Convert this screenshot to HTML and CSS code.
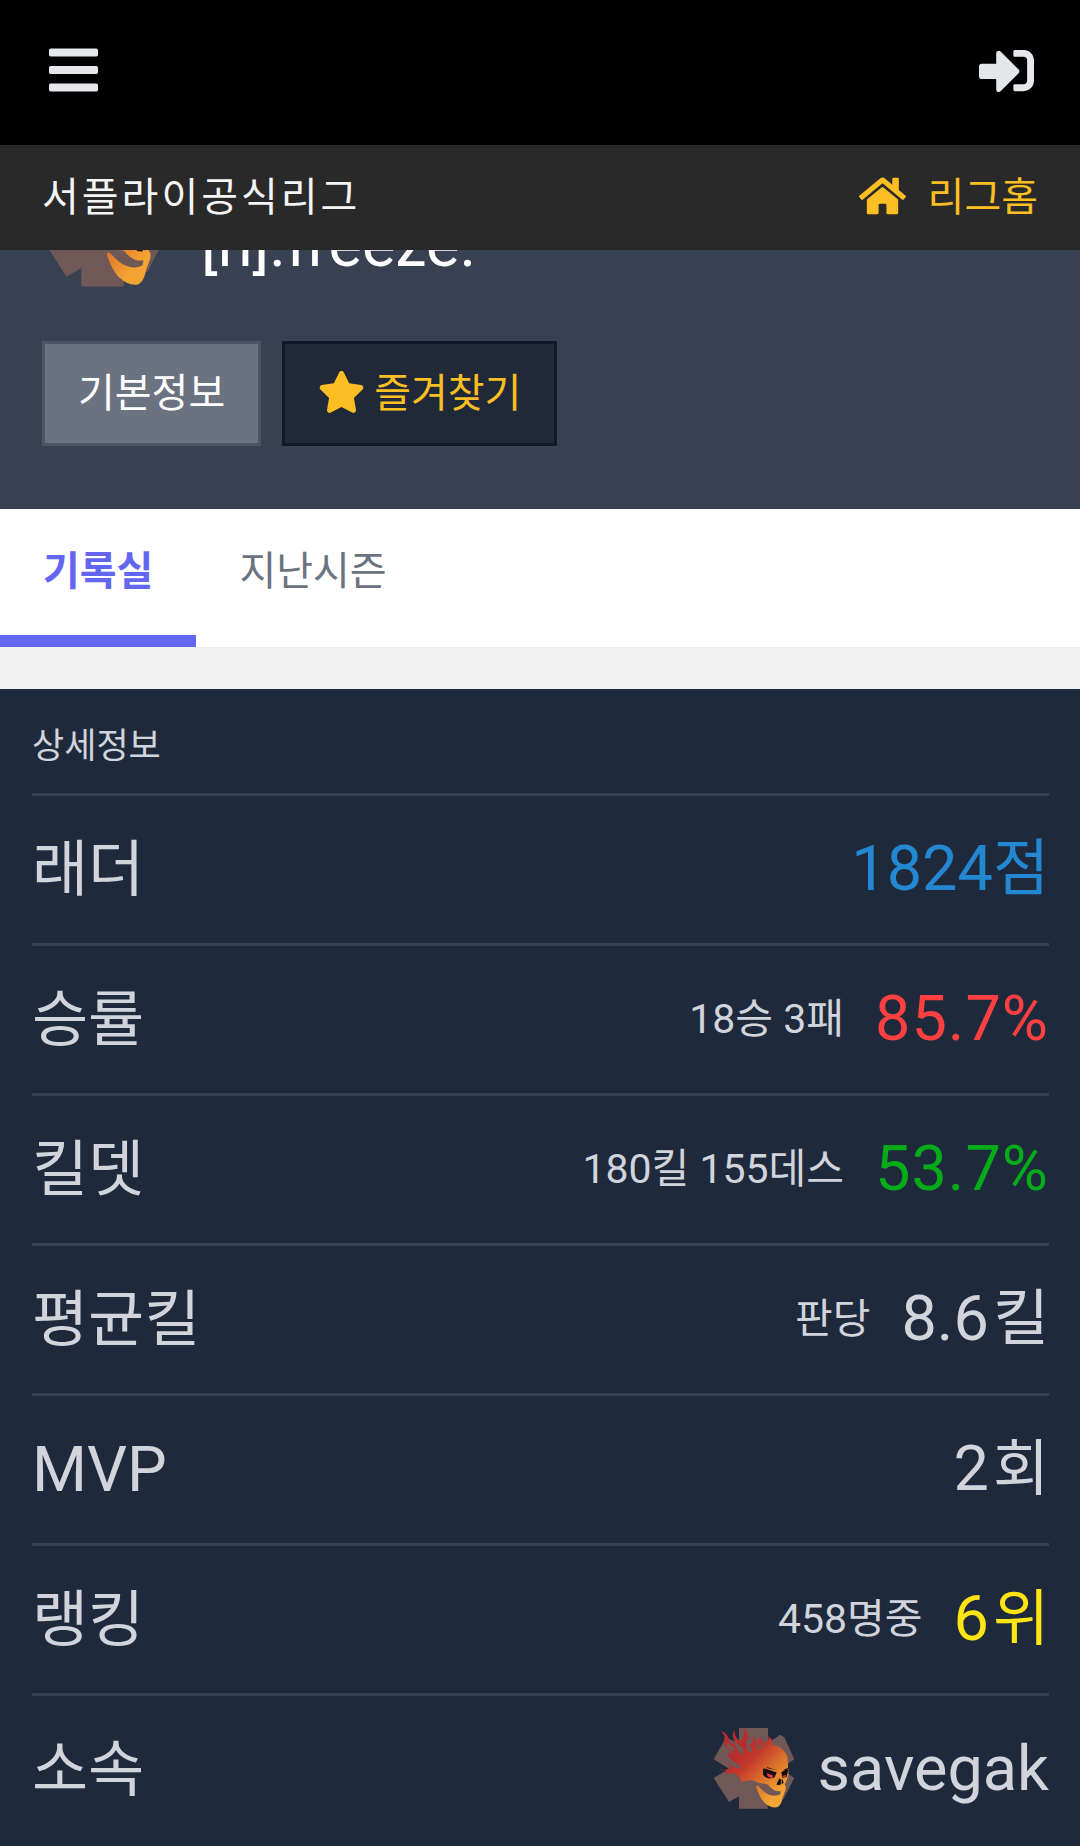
FILE: index.html
```html
<!DOCTYPE html>
<html lang="ko">
<head>
<meta charset="utf-8">
<meta name="viewport" content="width=device-width, initial-scale=1">
<title>서플라이공식리그</title>
<link rel="stylesheet" href="styles.css">
</head>
<body>
<svg class="sprite" aria-hidden="true">
  <defs>
    <linearGradient id="flame" gradientUnits="userSpaceOnUse" x1="150" y1="130" x2="270" y2="250">
      <stop offset="0" stop-color="#b92c2e"/>
      <stop offset=".25" stop-color="#c4392c"/>
      <stop offset=".6" stop-color="#da702c"/>
      <stop offset="1" stop-color="#f4a433"/>
    </linearGradient>
    <symbol id="skull" viewBox="70 58 246 243">
      <path fill="#6f5856" d="M148 58h87v44l37-24 12 8 30 66-40 28 40 28-32 62-8 4-40-20v46h-86v-37l-30 17-46-72 46-28-46-28 38-66 38 20z"/>
      <path fill="url(#flame)" d="M92 184c18 2 24-4 32-9-10-14-18-32-9-41 8-5 14 1 19 7-4-15-19-15-27-26-7-10-3-23-2-31-4-7-6-12-12-17 14 4 23 14 25 25 2 12 12 14 20 11-9-10-12-25-4-40 1 18 8 31 21 34 9-8 8-22 7-39 10 12 19 24 12 38-4 9 3 14 10 10 9-5 6-18 11-26-1 10 3 14 9 18 2-5 4-9 9-12-1 13 9 14 16 15 10-10 9-14 6-20 12 8 14 19 11 27 20 1 38 14 46 34 4 17 2 31 4 44 2 15-4 27-11 42 8 8 0 22-6 39-2 13-7 24-16 29-14 2-27-3-38-14-14-14-20-33-26-48l4-4c8 5 17 18 30 23 14 6 28 4 38-2-16-4-28-12-36-23-14-5-25-1-34-8-15-10-30-3-47-1-2-10-6-18-15-23-17-3-24 0-37-4 6-2 10-5 16-7-10 2-18-1-26-3z"/>
      <path fill="#6f5856" d="M112 140c8 2 10 12 18 18 10 5 22 10 25 22-14-1-24-4-33-13-7-7-13-16-10-27zM136 96c6 9 11 14 19 19 7 5 8 14 3 22-10-2-10-12-16-18-7-7-9-14-6-23zM168 96c10-2 5 11 13 17 6 5 7 12 2 17-9-1-12-7-11-14 0-8-5-13-4-20zM116 98c1 10 6 15 14 18 5 4 6 8 4 14-7-5-17-6-21-14-3-6-1-13 3-18zM199 94c2 9 4 14 10 17 5 3 5 8 3 12-7 0-11-5-12-10-2-6-3-12-1-19zM222 98c3 6 6 11 4 17-4-1-6-4-6-8 0-3 0-6 2-9zM208 232c10-8 20-4 28 2 13 12 26 15 38 13l-2 10c-14 8-31 4-43-4-8-6-15-12-21-21z"/>
      <path fill="#160d10" d="M222 179c15 3 25 10 39 12l-6 15c-15 6-30 4-35-9 0-8 0-13 2-18zM275 190l21-8-5 23-13 3zM269 209l7 5-4 15-12-1zM279 210l3 13-7 4zM231 175l31 10-28-6zM280 185l18-9-10 11z"/>
      <path fill="#e6394d" d="M232 193l20 8-7 8-12-7zM279 201l11-2-4 8-7-1z"/>
    </symbol>
  </defs>
</svg>

<header class="topbar">
  <nav class="topbar__main">
    <button class="icon-button" type="button" aria-label="메뉴">
      <svg class="icon-menu" viewBox="0 0 448 512" fill="currentColor" aria-hidden="true"><path d="M16 132h416c8.800 0 16-7.200 16-16V76c0-8.800-7.200-16-16-16H16C7.200 60 0 67.200 0 76v40c0 8.800 7.200 16 16 16zm0 160h416c8.800 0 16-7.200 16-16v-40c0-8.800-7.200-16-16-16H16c-8.800 0-16 7.200-16 16v40c0 8.800 7.200 16 16 16zm0 160h416c8.800 0 16-7.200 16-16v-40c0-8.800-7.200-16-16-16H16c-8.800 0-16 7.200-16 16v40c0 8.800 7.200 16 16 16z"/></svg>
    </button>
    <a class="icon-button" href="#login" aria-label="로그인">
      <svg class="icon-login" viewBox="0 0 512 512" fill="currentColor" aria-hidden="true"><path d="M416 448h-84c-6.600 0-12-5.400-12-12v-40c0-6.600 5.400-12 12-12h84c17.700 0 32-14.300 32-32V160c0-17.700-14.300-32-32-32h-84c-6.600 0-12-5.400-12-12V76c0-6.600 5.400-12 12-12h84c53 0 96 43 96 96v192c0 53-43 96-96 96zm-47-201L201 79c-15-15-41-4.500-41 17v96H24c-13.300 0-24 10.700-24 24v96c0 13.300 10.700 24 24 24h136v96c0 21.500 26 32 41 17l168-168c9.300-9.400 9.300-24.600 0-34z"/></svg>
    </a>
  </nav>
  <div class="topbar__league">
    <span class="league-name">서플라이공식리그</span>
    <a class="league-home" href="#home">
      <svg class="icon-glyph" viewBox="0 0 576 512" fill="currentColor" aria-hidden="true"><path d="M280.370 148.260L96 300.110V464a16 16 0 0 0 16 16l112.060-.290a16 16 0 0 0 15.920-16V368a16 16 0 0 1 16-16h64a16 16 0 0 1 16 16v95.640a16 16 0 0 0 16 16.050L464 480a16 16 0 0 0 16-16V300L295.670 148.260a12.190 12.190 0 0 0-15.300 0zM571.600 251.470L488 182.560V44.050a12 12 0 0 0-12-12h-56a12 12 0 0 0-12 12v72.610L318.470 43a48 48 0 0 0-61 0L4.340 251.470a12 12 0 0 0-1.600 16.900l25.500 31A12 12 0 0 0 45.150 301l235.220-193.740a12.190 12.190 0 0 1 15.300 0L530.900 301a12 12 0 0 0 16.900-1.600l25.500-31a12 12 0 0 0-1.700-16.930z"/></svg>
      <span>리그홈</span>
    </a>
  </div>
</header>

<main>
  <section class="profile">
    <div class="profile__player">
      <svg class="profile__emblem" aria-hidden="true"><use href="#skull"/></svg>
      <h1 class="profile__name">[n].freeze.</h1>
    </div>
    <div class="profile__actions">
      <button class="button button--info" type="button">기본정보</button>
      <button class="button button--favorite" type="button">
        <svg class="icon-glyph" viewBox="0 0 576 512" fill="currentColor" aria-hidden="true"><path d="M259.300 17.800L194 150.200 47.900 171.500c-26.200 3.800-36.700 36.100-17.700 54.600l105.700 103-25 145.500c-4.500 26.300 23.200 46 46.400 33.700L288 439.600l130.700 68.700c23.200 12.200 50.900-7.400 46.400-33.700l-25-145.500 105.700-103c19-18.500 8.500-50.800-17.700-54.600L382 150.200 316.700 17.800c-11.700-23.600-45.600-23.900-57.400 0z"/></svg>
        <span>즐겨찾기</span>
      </button>
    </div>
  </section>

  <nav class="tabs">
    <a class="tab tab--active" href="#record" aria-current="page">기록실</a>
    <a class="tab" href="#seasons">지난시즌</a>
  </nav>

  <section class="details">
    <h2 class="details__title">상세정보</h2>
    <dl class="stats">
      <div class="stat"><dt>래더</dt><dd><span class="value value--blue">1824<span class="unit">점</span></span></dd></div>
      <div class="stat"><dt>승률</dt><dd><small>18승 3패</small><span class="value value--tracked value--red">85.7%</span></dd></div>
      <div class="stat"><dt>킬뎃</dt><dd><small>180킬 155데스</small><span class="value value--tracked value--green">53.7%</span></dd></div>
      <div class="stat"><dt>평균킬</dt><dd><small>판당</small><span class="value">8.6<span class="unit unit--spaced">킬</span></span></dd></div>
      <div class="stat"><dt class="latin">MVP</dt><dd><span class="value">2<span class="unit unit--spaced">회</span></span></dd></div>
      <div class="stat"><dt>랭킹</dt><dd><small>458명중</small><span class="value value--yellow">6<span class="unit unit--spaced">위</span></span></dd></div>
      <div class="stat"><dt>소속</dt><dd class="clan"><svg class="clan__emblem" aria-hidden="true"><use href="#skull"/></svg><a class="value" href="#clan">savegak</a></dd></div>
    </dl>
  </section>
</main>
</body>
</html>
```
FILE: styles.css
```css
* {
  box-sizing: border-box;
}

body {
  margin: 0;
  background: #f1f1f1;
  color: #d1d5db;
  font-family: Roboto, "Noto Sans CJK KR", sans-serif;
  font-size: 40px;
  line-height: 60px;
}

a {
  color: inherit;
  text-decoration: none;
}

button {
  font: inherit;
  color: inherit;
}

.sprite {
  position: absolute;
  width: 0;
  height: 0;
}

/* Header stays over the page while it scrolls */
.topbar {
  position: fixed;
  top: 0;
  left: 0;
  right: 0;
  z-index: 10;
}

.topbar__main {
  display: flex;
  align-items: center;
  justify-content: space-between;
  height: 145px;
  padding: 0 46px 5px 49px;
  background: #000;
  color: #e5e7eb;
}

.icon-button {
  display: flex;
  padding: 0;
  border: 0;
  background: none;
}

.icon-menu {
  width: 49px;
  height: 56px;
}

.icon-login {
  width: 55px;
  height: 55px;
}

.icon-glyph {
  width: 47px;
  height: 42px;
  margin-bottom: 3px;
}

.topbar__league {
  display: flex;
  align-items: center;
  justify-content: space-between;
  height: 105px;
  padding: 0 42px;
  background: #292929;
}

.league-name {
  color: #f3f4f6;
  letter-spacing: 3px;
}

.league-home {
  display: flex;
  align-items: center;
  gap: 22px;
  color: #fbbf24;
}

.profile {
  padding: 167px 42px 63px;
  background: #374151;
}

.profile__player {
  display: flex;
  align-items: center;
  gap: 36px;
  height: 120px;
  margin-bottom: 54px;
}

.profile__emblem {
  width: 123px;
  height: 120px;
}

.profile__name {
  margin: 0;
  padding-top: 36px;
  color: #fff;
  font-size: 63px;
  font-weight: 400;
  line-height: 84px;
}

.profile__actions {
  display: flex;
  gap: 21px;
}

.button {
  display: flex;
  align-items: center;
  gap: 9px;
  height: 105px;
  padding: 0 33px;
  border: 3px solid;
}

.button--info {
  border-color: #4b5563;
  background: #6b7280;
  color: #fff;
}

.button--favorite {
  border-color: #111827;
  background: #1f2937;
  color: #fbbf24;
}

.tabs {
  display: flex;
  height: 138px;
  margin-bottom: 42px;
  background: #fff;
}

.tab {
  display: flex;
  align-items: center;
  padding: 0 43px;
  border-bottom: 12px solid transparent;
  color: #6b7280;
}

.tab--active {
  border-color: #6366f1;
  color: #6366f1;
  font-weight: 700;
}

.details {
  padding: 0 31px 3px 32px;
  background: #1e293b;
}

.details__title {
  margin: 0;
  padding: 28px 0 16px;
  font-size: 35px;
  font-weight: 400;
}

.stats {
  margin: 0;
}

.stat {
  display: flex;
  align-items: center;
  justify-content: space-between;
  height: 150px;
  border-top: 3px solid #334155;
  font-size: 63px;
  line-height: 84px;
}

.stat dt,
.unit {
  font-size: 61px;
}

.stat .latin {
  font-size: 63px;
}

.stat dd {
  display: flex;
  align-items: center;
  gap: 31px;
  margin: 0;
  padding-bottom: 2px;
}

.stat small {
  font-size: 41px;
}

.value--tracked {
  letter-spacing: 1px;
}

.unit--spaced {
  margin-left: 4px;
}

.value--blue {
  color: #2388d1;
}

.value--red {
  color: #ff4040;
}

.value--green {
  color: #06ab1a;
}

.value--yellow {
  color: #ffe414;
}

.stat .clan {
  gap: 23px;
}

.clan__emblem {
  width: 82px;
  height: 81px;
}
```
